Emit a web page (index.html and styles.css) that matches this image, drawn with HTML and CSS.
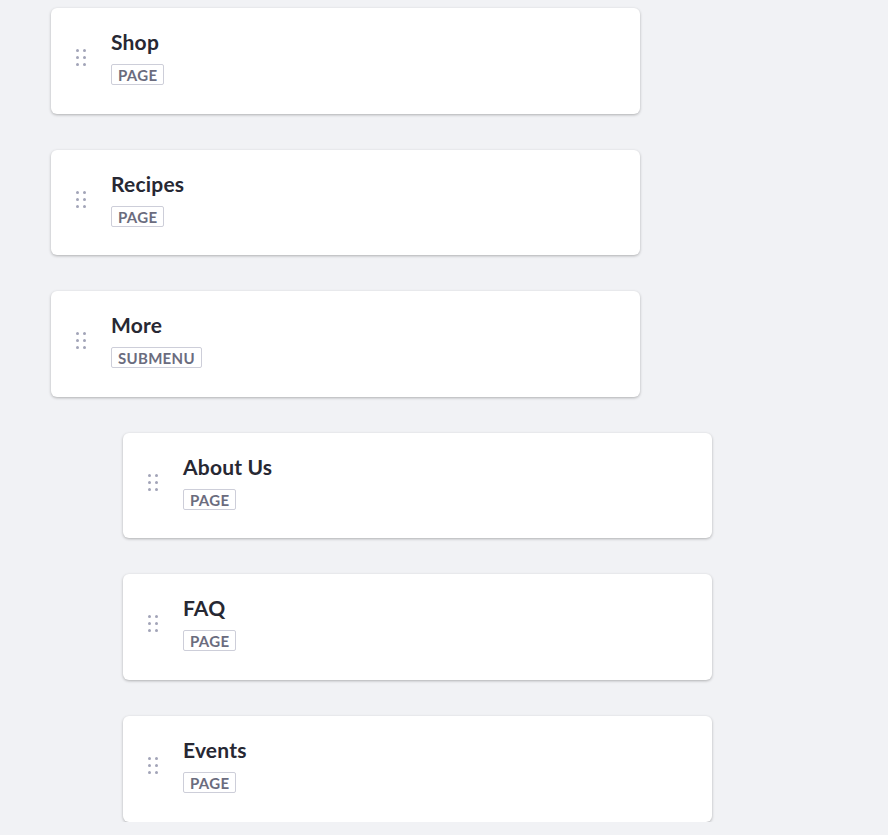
FILE: index.html
```html
<!DOCTYPE html>
<html>
<head>
<meta charset="utf-8">
<link rel="stylesheet" href="styles.css">
</head>
<body>
<div class="list">
  <div class="card">
    <div class="handle"><span></span><span></span><span></span><span></span><span></span><span></span></div>
    <div class="info"><div class="title">Shop</div><span class="badge">PAGE</span></div>
  </div>
  <div class="card">
    <div class="handle"><span></span><span></span><span></span><span></span><span></span><span></span></div>
    <div class="info"><div class="title">Recipes</div><span class="badge">PAGE</span></div>
  </div>
  <div class="card">
    <div class="handle"><span></span><span></span><span></span><span></span><span></span><span></span></div>
    <div class="info"><div class="title">More</div><span class="badge">SUBMENU</span></div>
  </div>
  <div class="card child">
    <div class="handle"><span></span><span></span><span></span><span></span><span></span><span></span></div>
    <div class="info"><div class="title">About Us</div><span class="badge">PAGE</span></div>
  </div>
  <div class="card child">
    <div class="handle"><span></span><span></span><span></span><span></span><span></span><span></span></div>
    <div class="info"><div class="title">FAQ</div><span class="badge">PAGE</span></div>
  </div>
  <div class="card child">
    <div class="handle"><span></span><span></span><span></span><span></span><span></span><span></span></div>
    <div class="info"><div class="title">Events</div><span class="badge">PAGE</span></div>
  </div>
</div>
</body>
</html>
```
FILE: styles.css
```css
html, body {
  margin: 0;
  padding: 0;
  background: #f1f2f5;
  font-family: Lato, "Noto Sans", sans-serif;
}
.list {
  display: flex;
  flex-direction: column;
  gap: 36px;
  padding: 8px 0 0 51px;
}
.card {
  box-sizing: border-box;
  width: 589px;
  height: 105.6px;
  background: #fff;
  border-radius: 6px;
  box-shadow: 0 1px 3px rgba(0, 0, 0, 0.28);
  display: flex;
  align-items: flex-start;
  padding: 22px 0 0 25px;
}
.card.child {
  margin-left: 72px;
}
.handle {
  display: grid;
  grid-template-columns: 3px 3px;
  column-gap: 4px;
  row-gap: 4px;
  width: 10px;
  margin-top: 19px;
}
.handle span {
  width: 3px;
  height: 3px;
  border-radius: 50%;
  background: #a2a4b8;
}
.info {
  margin-left: 25px;
  display: flex;
  flex-direction: column;
  align-items: flex-start;
}
.title {
  font-size: 21px;
  font-weight: 700;
  color: #272833;
  line-height: 24px;
  letter-spacing: 0.2px;
}
.badge {
  margin-top: 10px;
  font-size: 15px;
  font-weight: 700;
  color: #6b6c7e;
  border: 1px solid #cdced9;
  border-radius: 2px;
  padding: 1px 6px 0;
  line-height: 18px;
  letter-spacing: 0.3px;
}
```
